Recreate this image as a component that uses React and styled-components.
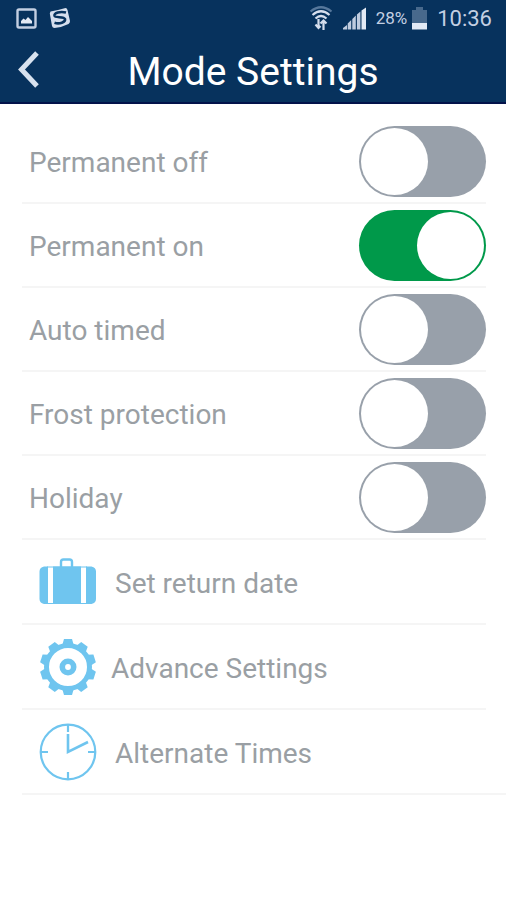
import React, { useState } from 'react'
import styled, { createGlobalStyle } from 'styled-components'

const GlobalStyle = createGlobalStyle`
  * {
    box-sizing: border-box;
  }
  body {
    margin: 0;
    background-color: #ffffff;
    font-family: Roboto, "Liberation Sans", sans-serif;
  }
`;

const Header = styled.header`
  background-color: #07325d;
  border-bottom: 2px solid #03124a;
`;

const StatusBar = styled.div`
  display: flex;
  align-items: center;
  justify-content: space-between;
  height: 36px;
  padding: 0 14px 0 16px;
  color: #c3cfe2;
`;

const StatusGroup = styled.div`
  display: flex;
  align-items: center;
  gap: ${(props) => props.$gap};
`;

const Battery = styled.span`
  display: flex;
  align-items: center;
  gap: 5px;
  font-size: 17px;
`;

const Clock = styled.span`
  font-size: 22px;
`;

const TitleBar = styled.div`
  display: grid;
  grid-template-columns: 60px 1fr 60px;
  align-items: center;
  height: 66px;
`;

const BackButton = styled.button`
  display: flex;
  align-items: center;
  height: 66px;
  padding: 0 0 0 18px;
  border: none;
  background: none;
  cursor: pointer;
`;

const Title = styled.h1`
  margin: 0;
  padding-top: 5px;
  color: #ffffff;
  font-size: 39px;
  font-weight: 400;
  line-height: 48px;
  text-align: center;
  white-space: nowrap;
`;

const List = styled.ul`
  margin: 0;
  padding: 16px 0 0 22px;
  list-style: none;
`;

const Item = styled.li`
  margin-right: 20px;
  border-bottom: 2px solid #f5f5f5;
  &:last-child {
    margin-right: 0;
  }
`;

const ToggleRow = styled.label`
  display: flex;
  align-items: center;
  justify-content: space-between;
  height: 82px;
  padding-left: 7px;
  color: #9a9fa4;
  font-size: 28px;
  cursor: pointer;
`;

const RowText = styled.span`
  padding-top: 2px;
`;

const Switch = styled.input`
  appearance: none;
  flex: none;
  display: flex;
  justify-content: ${(props) => (props.checked ? "flex-end" : "flex-start")};
  width: 127px;
  height: 71px;
  margin: 0;
  padding: 2px;
  border-radius: 36px;
  background-color: ${(props) => (props.checked ? "#00994a" : "#98a0aa")};
  cursor: pointer;
  &::before {
    content: "";
    width: 67px;
    height: 67px;
    border-radius: 50%;
    background-color: #ffffff;
  }
`;

const LinkRow = styled.a`
  display: flex;
  align-items: center;
  gap: ${(props) => props.$gap};
  height: 82px;
  padding-left: 17px;
  color: #9a9fa4;
  font-size: 28px;
  text-decoration: none;
`;

const LinkItem = styled(Item)`
  padding-top: 1px;
`;

const PictureIcon = () => (
  <svg width="21" height="21" viewBox="0 0 21 21" aria-hidden="true">
    <rect x="1.5" y="1.5" width="18" height="18" rx="1.5" fill="none" stroke="#c3cfe2" strokeWidth="2.4" />
    <path d="M5 15.5V13l2.5-2.5 2 1.5L12 9l4 4v2.5z" fill="#e3eaf5" />
  </svg>
)

const SIcon = () => (
  <svg width="22" height="22" viewBox="0 0 22 22" aria-hidden="true">
    <path d="M1.5 4.5Q9 3 16.5 1q1.5 0 2 2l2.5 11q0 2-1.5 3-7 3.5-14 4-2 0-2.5-2L.8 6.500z" fill="#d5deed" />
    <path d="M17 5.500C11 4 5 6 5.500 8.800c.6 2.400 9.500.3 10.500 3.200.8 3-5.500 5.500-10.500 3.800" fill="none" stroke="#07325d" strokeWidth="2.6" />
  </svg>
)

const WifiIcon = () => (
  <svg width="24" height="26" viewBox="0 0 24 26" fill="none" strokeWidth="2.2" aria-hidden="true">
    <path d="M1.5 6.500Q12-2 22.500 6.500" stroke="#57789c" />
    <path d="M3.500 10Q12 2.500 20.500 10M6.500 13.500Q12 8.500 17.500 13.500" stroke="#d5deed" />
    <path d="M9.500 14v9M6.500 19.500l3 3.500 2-2M14.500 25v-9M11.500 18.500l3-3 3 3" stroke="#d5deed" />
  </svg>
)

const SignalIcon = () => (
  <svg width="23" height="23" viewBox="0 0 23 23" aria-hidden="true">
    <path d="M0 22.500v-1.500l4-3v4.500zM4.700 22.500v-6l3.500-3.500v9.500zM9.300 22.500V12l3.500-3.500v14zM13.900 22.500V7.500l3.500-3v18z" fill="#c0ccdf" />
    <path d="M18.500 22.500v-19L23 .5v22z" fill="#e3eaf5" />
  </svg>
)

const BatteryIcon = () => (
  <svg width="15" height="23" viewBox="0 0 15 23" aria-hidden="true">
    <path d="M4 0h7v3h4v13H0V3h4z" fill="#48698c" />
    <path d="M0 16h15v6.500H0z" fill="#e3eaf5" />
  </svg>
)

const BackIcon = () => (
  <svg width="22" height="38" viewBox="0 0 22 38" aria-hidden="true">
    <path d="M19 3L3.500 19.500 19 36" fill="none" stroke="#d8e2ef" strokeWidth="5" />
  </svg>
)

const SuitcaseIcon = () => (
  <svg width="58" height="58" viewBox="0 0 58 58" aria-hidden="true">
    <path d="M22 14V9q0-2.500 2.500-2.500h6Q33 6.500 33 9v5" fill="none" stroke="#6fc5ef" strokeWidth="2.4" />
    <path d="M5 13.500h4V51H5q-4.500-1-4.500-5V18.500q0-4 4.500-5zM14 13.500h28V51H14zM47 13.500h5.500q4.500 1 4.500 5V46q0 4-4.500 5H47z" fill="#6fc5ef" />
    <path d="M8 14h40M8 50.500h40" stroke="#6fc5ef" strokeWidth="1" />
  </svg>
)

const teeth = [0, 36, 72, 108, 144, 180, 216, 252, 288, 324]

const GearIcon = () => (
  <svg width="58" height="58" viewBox="0 0 58 58" aria-hidden="true">
    {teeth.map((angle) => (
      <path key={angle} d="M23 8l2-7h8l2 7z" fill="#6fc5ef" transform={`rotate(${angle} 29 29)`} />
    ))}
    <circle cx="29" cy="29" r="21.500" fill="none" stroke="#6fc5ef" strokeWidth="5" />
    <circle cx="29" cy="29" r="5.700" fill="none" stroke="#6fc5ef" strokeWidth="5.600" />
  </svg>
)

const ClockIcon = () => (
  <svg width="58" height="58" viewBox="0 0 58 58" fill="none" stroke="#6fc5ef" strokeWidth="2.2" aria-hidden="true">
    <circle cx="29" cy="29" r="27.300" />
    <path d="M29 2v7M29 49v7M2 29h7M49 29h7" />
    <path d="M29 11v18l20-10" strokeWidth="2.600" />
  </svg>
)

const links = [
  { name: "Set return date", Icon: SuitcaseIcon, gap: "18px" },
  { name: "Advance Settings", Icon: GearIcon, gap: "14px" },
  { name: "Alternate Times", Icon: ClockIcon, gap: "18px" },
]

const App = () => {
  const [modes, setModes] = useState([
    { name: "Permanent off", on: false },
    { name: "Permanent on", on: true },
    { name: "Auto timed", on: false },
    { name: "Frost protection", on: false },
    { name: "Holiday", on: false },
  ])

  const toggle = (name) => {
    setModes(modes.map((mode) => (mode.name === name ? { ...mode, on: !mode.on } : mode)))
  }

  return (
    <>
      <GlobalStyle />
      <Header>
        <StatusBar>
          <StatusGroup $gap="12px">
            <PictureIcon />
            <SIcon />
          </StatusGroup>
          <StatusGroup $gap="10px">
            <WifiIcon />
            <SignalIcon />
            <Battery>28% <BatteryIcon /></Battery>
            <Clock>10:36</Clock>
          </StatusGroup>
        </StatusBar>
        <TitleBar>
          <BackButton aria-label="Back">
            <BackIcon />
          </BackButton>
          <Title>Mode Settings</Title>
        </TitleBar>
      </Header>
      <main>
        <List>
          {modes.map((mode) => (
            <Item key={mode.name}>
              <ToggleRow>
                <RowText>{mode.name}</RowText>
                <Switch type="checkbox" checked={mode.on} onChange={() => toggle(mode.name)} />
              </ToggleRow>
            </Item>
          ))}
          {links.map(({ name, Icon, gap }) => (
            <LinkItem key={name}>
              <LinkRow href="#" $gap={gap}>
                <Icon />
                <RowText>{name}</RowText>
              </LinkRow>
            </LinkItem>
          ))}
        </List>
      </main>
    </>
  )
}

export default App
